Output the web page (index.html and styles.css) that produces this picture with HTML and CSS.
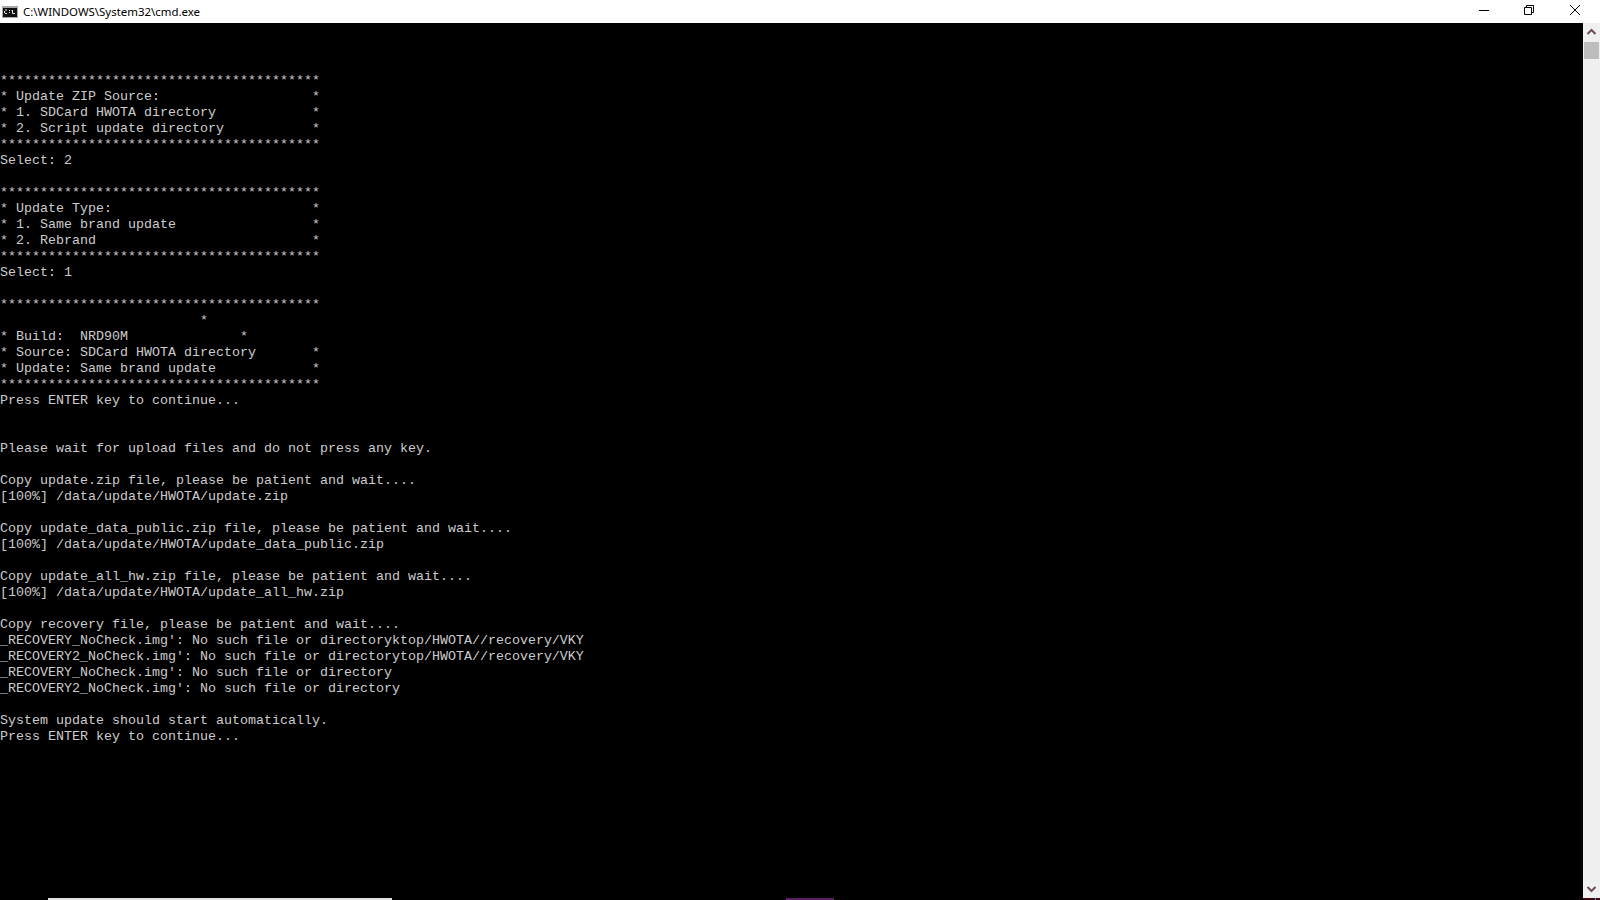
FILE: index.html
```html
<!DOCTYPE html>
<html lang="en">
<head>
<meta charset="utf-8">
<title>C:\WINDOWS\System32\cmd.exe</title>
<link rel="stylesheet" href="styles.css">
</head>
<body>
<div class="window">
  <header class="titlebar">
    <svg class="app-icon" width="16" height="16" viewBox="0 0 16 16">
      <rect x="0" y="2" width="16" height="12" fill="#a8a8a8"/>
      <rect x="1" y="4" width="14" height="9" fill="#111"/>
      <path d="M3 6h2M2.500 7v2M3 9.500h2M7 6.500h1M7 8.500h1M10.500 6v3.500h2.500M9.500 6.500h1" stroke="#e4e4e4" fill="none"/>
    </svg>
    <span class="title">C:\WINDOWS\System32\cmd.exe</span>
    <div class="controls">
      <button class="ctl ctl-min" aria-label="Minimize">
        <svg width="10" height="10" viewBox="0 0 10 10"><path d="M0 5.500h10" stroke="#000" fill="none"/></svg>
      </button>
      <button class="ctl" aria-label="Restore">
        <svg width="10" height="10" viewBox="0 0 10 10"><path d="M.5 2.500h7v7h-7zM2.500 2.500V.5h7v7h-2" stroke="#000" fill="none"/></svg>
      </button>
      <button class="ctl" aria-label="Close">
        <svg width="10" height="10" viewBox="0 0 10 10"><path d="M0 0l10 10M10 0L0 10" stroke="#000" fill="none"/></svg>
      </button>
    </div>
  </header>
  <div class="body">
    <pre class="console">



****************************************
* Update ZIP Source:                   *
* 1. SDCard HWOTA directory            *
* 2. Script update directory           *
****************************************
Select: 2

****************************************
* Update Type:                         *
* 1. Same brand update                 *
* 2. Rebrand                           *
****************************************
Select: 1

****************************************
                         *
* Build:  NRD90M              *
* Source: SDCard HWOTA directory       *
* Update: Same brand update            *
****************************************
Press ENTER key to continue...


Please wait for upload files and do not press any key.

Copy update.zip file, please be patient and wait....
[100%] /data/update/HWOTA/update.zip

Copy update_data_public.zip file, please be patient and wait....
[100%] /data/update/HWOTA/update_data_public.zip

Copy update_all_hw.zip file, please be patient and wait....
[100%] /data/update/HWOTA/update_all_hw.zip

Copy recovery file, please be patient and wait....
_RECOVERY_NoCheck.img': No such file or directoryktop/HWOTA//recovery/VKY
_RECOVERY2_NoCheck.img': No such file or directorytop/HWOTA//recovery/VKY
_RECOVERY_NoCheck.img': No such file or directory
_RECOVERY2_NoCheck.img': No such file or directory

System update should start automatically.
Press ENTER key to continue...</pre>
    <aside class="scrollbar">
      <svg class="arrow" width="17" height="17" viewBox="0 0 17 17"><path d="M4.500 11l4-4 4 4" stroke="#6d4a5c" stroke-width="2" fill="none"/></svg>
      <div class="thumb"></div>
      <div class="track"></div>
      <svg class="arrow" width="17" height="17" viewBox="0 0 17 17"><path d="M4.500 6l4 4 4-4" stroke="#6d4a5c" stroke-width="2" fill="none"/></svg>
    </aside>
  </div>
  <div class="bleed">
    <span class="bleed-a"></span>
    <span class="bleed-b"></span>
    <span class="bleed-c"></span>
    <span class="bleed-d"></span>
  </div>
</div>
</body>
</html>
```
FILE: styles.css
```css
html, body {
  margin: 0;
  height: 100%;
  background: #000;
  overflow: hidden;
}
.window {
  width: 1600px;
  height: 900px;
  display: flex;
  flex-direction: column;
  position: relative;
}
.titlebar {
  height: 23px;
  flex: none;
  background: #fff;
  display: flex;
  align-items: center;
  padding-left: 2px;
  box-sizing: border-box;
}
.app-icon {
  flex: none;
}
.title {
  margin-left: 5px;
  font: 11.45px/23px "Noto Sans", "Open Sans", sans-serif;
  color: #000;
  white-space: pre;
}
.controls {
  margin-left: auto;
  display: flex;
  height: 23px;
  padding-right: 2px;
}
.ctl {
  width: 46px;
  height: 20px;
  padding: 0;
  border: 0;
  background: transparent;
  display: flex;
  align-items: center;
  justify-content: center;
}
.ctl-min {
  width: 44px;
}
.ctl svg {
  display: block;
}
.body {
  flex: 1;
  display: flex;
  min-height: 0;
}
.console {
  flex: 1;
  margin: 0;
  padding-top: 2px;
  color: #ccc;
  background: #000;
  font: 13.33px/16px "Liberation Mono", monospace;
  white-space: pre;
  overflow: hidden;
}
.scrollbar {
  width: 17px;
  flex: none;
  background: #f0f0f0;
  display: flex;
  flex-direction: column;
  height: 875px;
}
.arrow {
  flex: none;
  display: block;
}
.thumb {
  flex: none;
  height: 17px;
  margin: 2px 1px 0;
  background: #bdbdbd;
}
.track {
  flex: 1;
}
.bleed {
  position: absolute;
  left: 0;
  right: 0;
  bottom: 0;
  height: 2px;
}
.bleed-a {
  position: absolute;
  left: 48px;
  width: 344px;
  height: 2px;
  background: #e2e2e2;
}
.bleed-b {
  position: absolute;
  left: 786px;
  width: 48px;
  height: 2px;
  background: #5a1f5e;
}
.bleed-c {
  position: absolute;
  left: 1583px;
  width: 17px;
  height: 2px;
  background: #3a0a12;
}
.bleed-d {
  position: absolute;
  left: 1595px;
  width: 1px;
  height: 2px;
  background: #6a8fc0;
}
```
